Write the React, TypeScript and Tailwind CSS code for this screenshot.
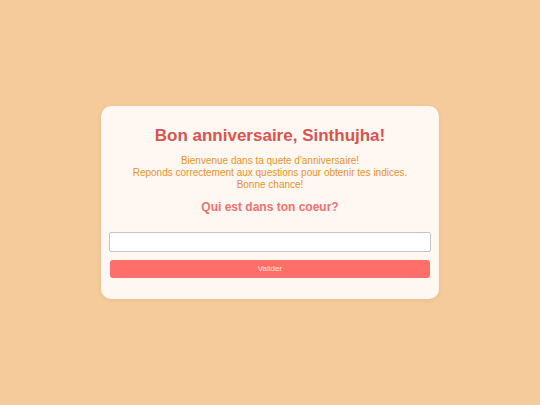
import React from "react";

export default function App() {
  return (
    <div className="flex min-h-screen w-full items-center justify-center bg-[#f6cb9b] font-['Liberation_Sans',Arial,sans-serif]">
      {/* Card */}
      <div className="flex w-[338px] flex-col items-center rounded-[10px] bg-[#fff8f2] px-2 pt-[20px] pb-[21px] text-center shadow-[0_1px_4px_rgba(0,0,0,0.08)]">
        <h1 className="text-[17px] leading-[20px] font-bold text-[#d9534f]">
          Bon anniversaire, Sinthujha!
        </h1>
        <p className="mt-[9px] text-[10px] leading-[12px] text-[#e8912e]">
          Bienvenue dans ta quete d'anniversaire!
          <br />
          Reponds correctement aux questions pour obtenir tes indices.
          <br />
          Bonne chance!
        </p>
        <h2 className="mt-[9px] text-[12px] leading-[14px] font-bold text-[#f07070]">
          Qui est dans ton coeur?
        </h2>

        {/* Answer form */}
        <input
          type="text"
          className="mt-[18px] h-5 w-full rounded-[2px] border border-[#c4c4c4] bg-white px-1 text-[11px] outline-none"
        />
        <button className="mt-2 h-[18px] w-[320px] rounded-[3px] bg-[#ff6f69] text-[8px] text-white/80">
          Valider
        </button>
      </div>
    </div>
  );
}
